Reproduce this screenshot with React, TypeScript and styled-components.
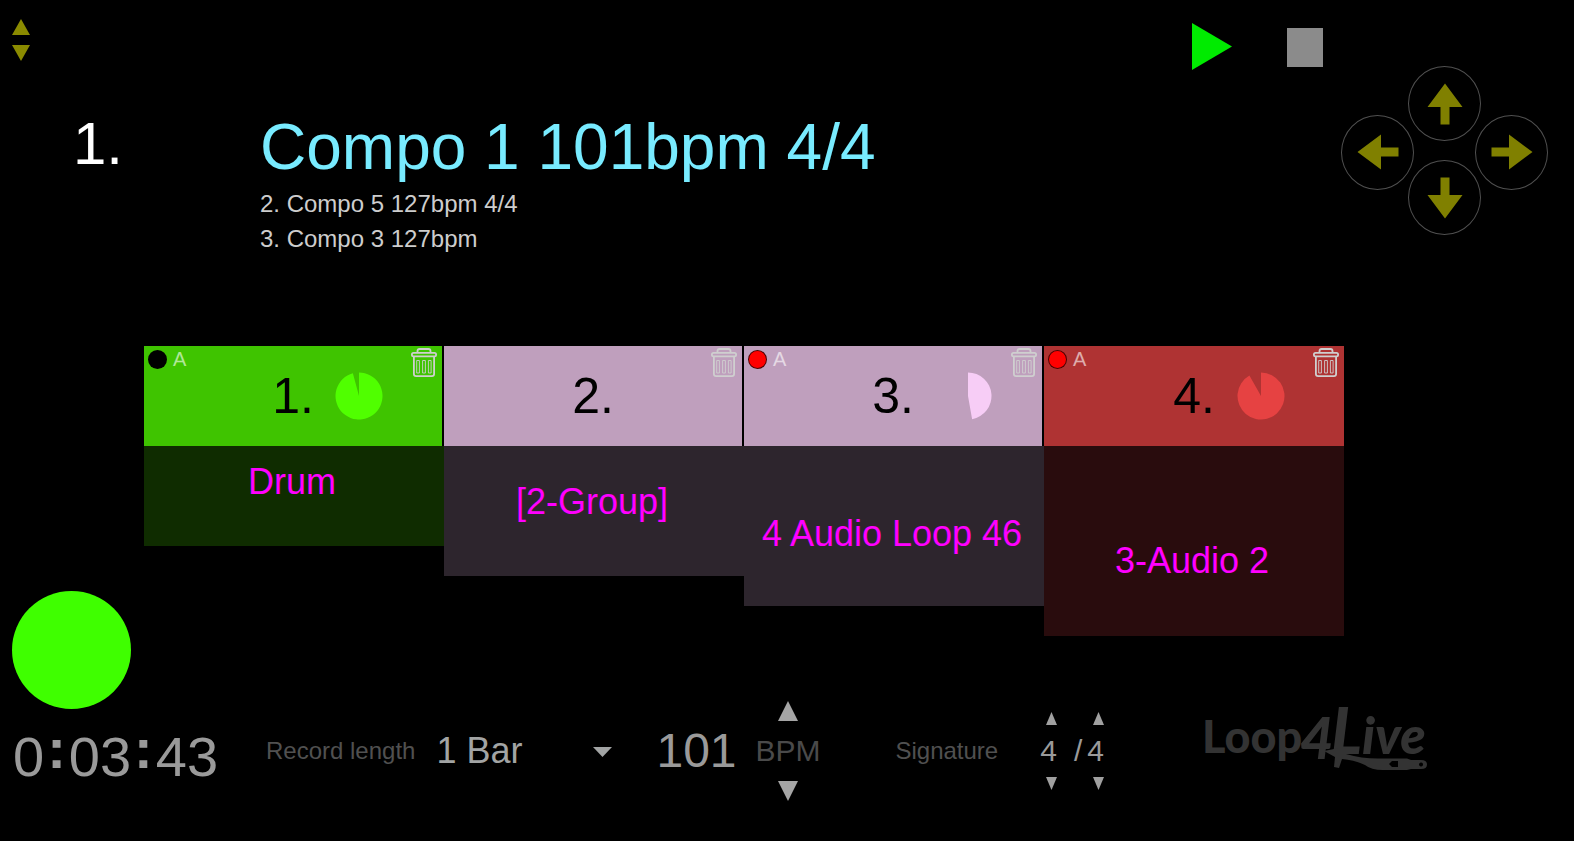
import React from "react";
import styled, { createGlobalStyle } from "styled-components";

const GlobalStyle = createGlobalStyle`
  * { box-sizing: border-box; }
  body {
    margin: 0;
    background: #000;
    color: #9a9a9a;
    font-family: "Liberation Sans", Arial, sans-serif;
  }
  button, input, select {
    font: inherit;
    color: inherit;
    background: none;
    border: 0;
    margin: 0;
    padding: 0;
  }
  button { cursor: pointer; }
  svg { display: block; }
`;

const Page = styled.div`
  min-height: 100vh;
  display: flex;
  flex-direction: column;
`;

/* ---------- header ---------- */

const Header = styled.header`
  display: grid;
  grid-template-columns: 260px 1fr auto;
  align-items: start;
  padding-bottom: 90px;
`;

const SongPosition = styled.div`
  display: flex;
  flex-direction: column;
  gap: 47px;
  padding: 19px 0 0 12px;
`;

const SortButtons = styled.div`
  display: flex;
  flex-direction: column;
  align-items: flex-start;
  gap: 10px;
`;

const SongNumber = styled.div`
  padding-left: 61px;
  font-size: 60px;
  line-height: 72px;
  color: #fff;
`;

const Songs = styled.div`
  padding-top: 111px;
`;

const SongTitle = styled.h1`
  margin: 0 0 3px;
  font-size: 64px;
  line-height: 72px;
  font-weight: 400;
  color: #78ebff;
`;

const NextSongs = styled.ul`
  margin: 0;
  padding: 0;
  list-style: none;
  font-size: 24px;
  line-height: 35px;
  color: #cdcdcd;
`;

const Controls = styled.div`
  display: flex;
  align-items: flex-start;
  padding-right: 26px;
`;

const Transport = styled.div`
  display: flex;
  align-items: center;
  gap: 55px;
  padding: 23px 18px 0 0;
`;

const DPad = styled.div`
  display: flex;
  align-items: center;
  padding-top: 66px;
`;

const DPadColumn = styled.div`
  display: flex;
  flex-direction: column;
  gap: 19px;
  margin: 0 -6px 3px;
`;

const RoundButton = styled.button`
  width: 73px;
  height: 75px;
  display: flex;
  align-items: center;
  justify-content: center;
  border: 1px solid #505050;
  border-radius: 50%;
`;

/* ---------- tracks ---------- */

const Main = styled.main`
  display: grid;
  grid-template-columns: 144px 1fr 230px;
  align-items: start;
`;

const BeatColumn = styled.div`
  padding: 245px 0 0 12px;
`;

const BeatLight = styled.div`
  width: 119px;
  height: 118px;
  border-radius: 50%;
  background: #3fff00;
`;

const Tracks = styled.div`
  display: grid;
  grid-template-columns: repeat(4, 1fr);
  align-items: start;
`;

const Track = styled.section`
  &:last-child > header { margin-right: 0; }
`;

const TrackHeader = styled.header<{ $color: string }>`
  position: relative;
  display: grid;
  grid-template-columns: 1fr auto 1fr;
  align-items: center;
  height: 100px;
  margin-right: 2px;
  background: ${(p) => p.$color};
`;

const ArmButton = styled.button`
  position: absolute;
  top: 4px;
  left: 4px;
  display: flex;
  align-items: center;
  gap: 6px;
  font-size: 20px;
  line-height: 19px;
  color: rgba(255, 255, 255, 0.6);
`;

const ArmDot = styled.span<{ $color: string }>`
  width: 19px;
  height: 19px;
  border: 1px solid rgba(0, 0, 0, 0.7);
  border-radius: 50%;
  background: ${(p) => p.$color};
`;

const DeleteButton = styled.button`
  position: absolute;
  top: 2px;
  right: 5px;
`;

const TrackNumber = styled.div`
  grid-column: 2;
  font-size: 50px;
  line-height: 60px;
  color: #000;
`;

const PieSlot = styled.div<{ $gap: number }>`
  padding-left: ${(p) => p.$gap}px;
`;

const TrackBody = styled.div<{ $color: string; $height: number; $drop: number }>`
  height: ${(p) => p.$height}px;
  padding: ${(p) => p.$drop}px 4px 0 0;
  background: ${(p) => p.$color};
  font-size: 36px;
  line-height: 40px;
  text-align: center;
  color: #f0f;
`;

/* ---------- footer ---------- */

const Footer = styled.footer`
  display: flex;
  align-items: center;
  min-height: 120px;
  margin-top: -20px;
  padding-left: 13px;
`;

const Timer = styled.div`
  width: 253px;
  padding-top: 13px;
  font-size: 56px;
  line-height: 64px;
  white-space: nowrap;
`;

const Colon = styled.b`
  padding: 0 3px;
  line-height: 1px;
  vertical-align: 8px;
`;

const Caption = styled.label`
  font-size: 24px;
  line-height: 28px;
  color: #505050;
  white-space: nowrap;
`;

const LengthPicker = styled.div`
  position: relative;
  width: 177px;
  margin: 0 43px 0 21px;
`;

const LengthSelect = styled.select`
  width: 100%;
  appearance: none;
  font-size: 36px;
  line-height: 40px;
  color: #a2a4a4;
`;

const DropMark = styled.svg`
  position: absolute;
  right: 1px;
  top: 16px;
  pointer-events: none;
`;

const TempoInput = styled.input`
  width: 99px;
  font-size: 48px;
  line-height: 56px;
`;

const Stepper = styled.div<{ $gap: number; $align?: string }>`
  display: flex;
  flex-direction: column;
  align-items: ${(p) => p.$align ?? "center"};
  gap: ${(p) => p.$gap}px;
  font-size: 30px;
  line-height: 32px;
`;

const TempoCaption = styled.label`
  color: #4a4a4a;
`;

const SignatureCaption = styled(Caption)`
  margin: 0 42px 0 75px;
`;

const Slash = styled.span`
  margin: 0 5px 0 17px;
  font-size: 30px;
  line-height: 32px;
`;

const Logo = styled.a`
  margin: 0 0 31px 97px;
`;

/* ---------- drawings ---------- */

type TriangleProps = { w: number; h: number; color: string; down?: boolean };

function Triangle({ w, h, color, down }: TriangleProps) {
  const points = down ? `0,0 ${w},0 ${w / 2},${h}` : `0,${h} ${w},${h} ${w / 2},0`;
  return (
    <svg width={w} height={h} aria-hidden="true">
      <polygon points={points} fill={color} />
    </svg>
  );
}

function Arrow({ angle }: { angle: number }) {
  return (
    <svg width="42" height="42" viewBox="-21 -21 42 42" aria-hidden="true">
      <path
        d="M0 -20.5 L17.5 3 H4.5 V20.5 H-4.5 V3 H-17.5 Z"
        fill="#808000"
        transform={`rotate(${angle})`}
      />
    </svg>
  );
}

function Trash() {
  return (
    <svg width="26" height="29" viewBox="0 0 26 29" fill="none" stroke="#cfcfcf" aria-hidden="true">
      <path d="M6.5 4.5 V3 Q6.5 1 8.5 1 H17.5 Q19.5 1 19.5 3 V4.5" strokeWidth="1.8" />
      <rect x="0.9" y="4.8" width="24.2" height="3.6" rx="1.6" strokeWidth="1.8" />
      <path d="M2.9 8.5 V26 Q2.9 28.1 5.1 28.1 H20.9 Q23.1 28.1 23.1 26 V8.5" strokeWidth="1.8" />
      <path d="M5.7 12.5 h2.7 v12.5 h-2.7 Z M11.6 12.5 h2.8 v12.5 h-2.8 Z M17.4 12.5 h2.7 v12.5 h-2.7 Z" strokeWidth="0.9" />
    </svg>
  );
}

function Pie({ value, color }: { value: number; color: string }) {
  const a = value * 2 * Math.PI;
  const x = 24 + 23.5 * Math.sin(a);
  const y = 24 - 23.5 * Math.cos(a);
  return (
    <svg width="48" height="48" aria-hidden="true">
      <path d={`M24 24 V0.5 A23.5 23.5 0 ${value > 0.5 ? 1 : 0} 1 ${x} ${y} Z`} fill={color} />
    </svg>
  );
}

function LogoMark() {
  return (
    <svg width="236" height="92" viewBox="-4 -12 236 92" fill="#333" fontFamily="Lato, sans-serif" fontWeight="900" role="img" aria-label="Loop4Live">
      <text y="52">
        <tspan x="-3" fontSize="45">Loop</tspan>
        <tspan x="95" y="58" fontSize="58" fontStyle="italic">4</tspan>
        <tspan x="126" y="53" fontSize="64" fontStyle="italic">L</tspan>
        <tspan x="157" y="53" fontSize="52" fontStyle="italic">ive</tspan>
      </text>
      <path
        d="M119 50 L134 47 L141 53 Q158 58 176 57.5 H202 L206 59 H216 Q222 59 222 63.5 Q222 68 216 68 H206 L202 69 H178 Q166 69 160 64 Q150 59 137 58 L134 67 L129 66 L130 56 Z M187 60 L184 63 L187 66 H193 V60 Z M216 61.5 a2 2 0 1 0 0.1 0 Z"
        fillRule="evenodd"
      />
    </svg>
  );
}

/* ---------- data ---------- */

const tracks = [
  { name: "Drum", color: "#3fc400", body: "#0f2c00", height: 100, drop: 16, arm: "#000", pie: 0.958, pieColor: "#50ff00", gap: 21 },
  { name: "[2-Group]", color: "#bf9fbd", body: "#2d252d", height: 130, drop: 36 },
  { name: "4 Audio Loop 46", color: "#bf9fbd", body: "#2d252d", height: 160, drop: 68, arm: "#f00", pie: 0.472, pieColor: "#f7cdf6", gap: 30 },
  { name: "3-Audio 2", color: "#af3333", body: "#290c0d", height: 190, drop: 95, arm: "#f00", pie: 0.918, pieColor: "#e64242", gap: 22 },
];

export default function App() {
  return (
    <Page>
      <GlobalStyle />
      <Header>
        <SongPosition>
          <SortButtons>
            <button aria-label="Previous song"><Triangle w={18} h={16} color="#8b8b00" /></button>
            <button aria-label="Next song"><Triangle w={18} h={16} color="#8b8b00" down /></button>
          </SortButtons>
          <SongNumber>1.</SongNumber>
        </SongPosition>
        <Songs>
          <SongTitle>Compo 1 101bpm 4/4</SongTitle>
          <NextSongs>
            <li>2. Compo 5 127bpm 4/4</li>
            <li>3. Compo 3 127bpm</li>
          </NextSongs>
        </Songs>
        <Controls>
          <Transport>
            <button aria-label="Play">
              <svg width="40" height="48" aria-hidden="true"><polygon points="0,0 40,23.5 0,47" fill="#00eb00" /></svg>
            </button>
            <button aria-label="Stop">
              <svg width="36" height="39" aria-hidden="true"><rect width="36" height="39" fill="#8b8b8b" /></svg>
            </button>
          </Transport>
          <DPad>
            <RoundButton aria-label="Left"><Arrow angle={-90} /></RoundButton>
            <DPadColumn>
              <RoundButton aria-label="Up"><Arrow angle={0} /></RoundButton>
              <RoundButton aria-label="Down"><Arrow angle={180} /></RoundButton>
            </DPadColumn>
            <RoundButton aria-label="Right"><Arrow angle={90} /></RoundButton>
          </DPad>
        </Controls>
      </Header>

      <Main>
        <BeatColumn><BeatLight /></BeatColumn>
        <Tracks>
          {tracks.map((t, i) => (
            <Track key={t.name}>
              <TrackHeader $color={t.color}>
                {t.arm && <ArmButton><ArmDot $color={t.arm} />A</ArmButton>}
                <TrackNumber>{i + 1}.</TrackNumber>
                {t.pie && <PieSlot $gap={t.gap}><Pie value={t.pie} color={t.pieColor} /></PieSlot>}
                <DeleteButton aria-label="Clear track"><Trash /></DeleteButton>
              </TrackHeader>
              <TrackBody $color={t.body} $height={t.height} $drop={t.drop}>{t.name}</TrackBody>
            </Track>
          ))}
        </Tracks>
      </Main>

      <Footer>
        <Timer>0<Colon>:</Colon>03<Colon>:</Colon>43</Timer>
        <Caption htmlFor="length">Record length</Caption>
        <LengthPicker>
          <LengthSelect id="length" defaultValue="1 Bar">
            <option>1 Bar</option>
          </LengthSelect>
          <DropMark width="19" height="10" aria-hidden="true"><polygon points="0,0 19,0 9.5,10" fill="#a2a4a4" /></DropMark>
        </LengthPicker>
        <TempoInput id="tempo" defaultValue="101" />
        <Stepper $gap={14}>
          <button aria-label="Faster"><Triangle w={20} h={20} color="#a5a5a5" /></button>
          <TempoCaption htmlFor="tempo">BPM</TempoCaption>
          <button aria-label="Slower"><Triangle w={20} h={20} color="#a5a5a5" down /></button>
        </Stepper>
        <SignatureCaption as="span">Signature</SignatureCaption>
        <Stepper $gap={10} $align="flex-end">
          <button aria-label="More beats"><Triangle w={11} h={13} color="#a0a0a0" /></button>
          <span>4</span>
          <button aria-label="Fewer beats"><Triangle w={11} h={13} color="#a0a0a0" down /></button>
        </Stepper>
        <Slash>/</Slash>
        <Stepper $gap={10} $align="flex-end">
          <button aria-label="Longer note"><Triangle w={11} h={13} color="#a0a0a0" /></button>
          <span>4</span>
          <button aria-label="Shorter note"><Triangle w={11} h={13} color="#a0a0a0" down /></button>
        </Stepper>
        <Logo href="#"><LogoMark /></Logo>
      </Footer>
    </Page>
  );
}
